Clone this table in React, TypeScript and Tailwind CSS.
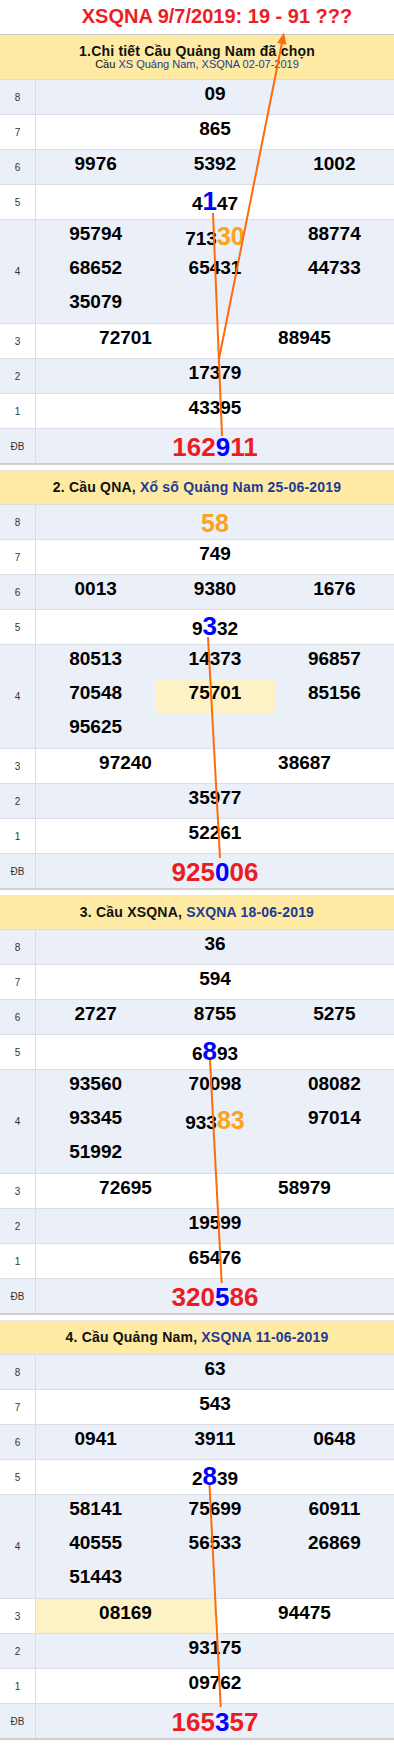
import React from 'react';

type Row = { label: string; cols: 1 | 2 | 3; items: string[] };
type Section = { head: React.ReactNode; tall?: boolean; rows: Row[]; db: string };

const sections: Section[] = [
  {
    tall: true,
    head: (
      <>
        <div className="text-[14px] leading-[14px] font-bold tracking-[0.2px] text-[#111]">1.Chi tiết Cầu Quảng Nam đã chọn</div>
        <div className="text-[11px] leading-[12px] text-[#111]">
          Cầu <span className="text-[#1f3a93]">XS Quảng Nam, XSQNA 02-07-2019</span>
        </div>
      </>
    ),
    rows: [
      { label: '8', cols: 1, items: ['09'] },
      { label: '7', cols: 1, items: ['865'] },
      { label: '6', cols: 3, items: ['9976', '5392', '1002'] },
      { label: '5', cols: 1, items: ['4[1]47'] },
      { label: '4', cols: 3, items: ['95794', '713{30}', '88774', '68652', '65431', '44733', '35079'] },
      { label: '3', cols: 2, items: ['72701', '88945'] },
      { label: '2', cols: 1, items: ['17379'] },
      { label: '1', cols: 1, items: ['43395'] },
    ],
    db: '162[9]11',
  },
  {
    head: (
      <div>
        2. Cầu QNA, <span className="text-[#1f3a93]">Xổ số Quảng Nam 25-06-2019</span>
      </div>
    ),
    rows: [
      { label: '8', cols: 1, items: ['<58>'] },
      { label: '7', cols: 1, items: ['749'] },
      { label: '6', cols: 3, items: ['0013', '9380', '1676'] },
      { label: '5', cols: 1, items: ['9[3]32'] },
      { label: '4', cols: 3, items: ['80513', '14373', '96857', '70548', '!75701', '85156', '95625'] },
      { label: '3', cols: 2, items: ['97240', '38687'] },
      { label: '2', cols: 1, items: ['35977'] },
      { label: '1', cols: 1, items: ['52261'] },
    ],
    db: '925[0]06',
  },
  {
    head: (
      <div>
        3. Cầu XSQNA, <span className="text-[#1f3a93]">SXQNA 18-06-2019</span>
      </div>
    ),
    rows: [
      { label: '8', cols: 1, items: ['36'] },
      { label: '7', cols: 1, items: ['594'] },
      { label: '6', cols: 3, items: ['2727', '8755', '5275'] },
      { label: '5', cols: 1, items: ['6[8]93'] },
      { label: '4', cols: 3, items: ['93560', '70098', '08082', '93345', '933{83}', '97014', '51992'] },
      { label: '3', cols: 2, items: ['72695', '58979'] },
      { label: '2', cols: 1, items: ['19599'] },
      { label: '1', cols: 1, items: ['65476'] },
    ],
    db: '320[5]86',
  },
  {
    head: (
      <div>
        4. Cầu Quảng Nam, <span className="text-[#1f3a93]">XSQNA 11-06-2019</span>
      </div>
    ),
    rows: [
      { label: '8', cols: 1, items: ['63'] },
      { label: '7', cols: 1, items: ['543'] },
      { label: '6', cols: 3, items: ['0941', '3911', '0648'] },
      { label: '5', cols: 1, items: ['2[8]39'] },
      { label: '4', cols: 3, items: ['58141', '75699', '60911', '40555', '56533', '26869', '51443'] },
      { label: '3', cols: 2, items: ['!08169', '94475'] },
      { label: '2', cols: 1, items: ['93175'] },
      { label: '1', cols: 1, items: ['09762'] },
    ],
    db: '165[3]57',
  },
];

// [x] = blue big digit, {x} = orange big digits, <x> = orange number alone in its row
function parse(v: string) {
  const out: { t: string; k: string }[] = [];
  let k = 'n';
  let buf = '';
  const flush = () => {
    if (buf) out.push({ t: buf, k });
    buf = '';
  };
  for (const ch of v) {
    if (ch === '[') { flush(); k = 'b'; }
    else if (ch === '{') { flush(); k = 'o'; }
    else if (ch === '<') { flush(); k = 'O'; }
    else if (ch === ']' || ch === '}' || ch === '>') { flush(); k = 'n'; }
    else buf += ch;
  }
  flush();
  return out;
}

function Num({ v, db }: { v: string; db?: boolean }) {
  return (
    <>
      {parse(v).map((p, i) => {
        if (db) {
          return (
            <span key={i} className={`text-[26px] leading-[37px] ${p.k === 'b' ? 'text-[#0000ff]' : 'text-[#ed1c24]'}`}>
              {p.t}
            </span>
          );
        }
        if (p.k === 'b') return <span key={i} className="text-[26px] leading-[32px] text-[#0000ff]">{p.t}</span>;
        if (p.k === 'o') return <span key={i} className="text-[25px] leading-[32px] text-[#fda31b]">{p.t}</span>;
        if (p.k === 'O') return <span key={i} className="text-[25px] leading-[36px] text-[#fda31b]">{p.t}</span>;
        return <span key={i}>{p.t}</span>;
      })}
    </>
  );
}

function TableRow({ label, cols, items, light, db }: Row & { light: boolean; db?: boolean }) {
  const grid = cols === 3 ? 'grid-cols-3' : cols === 2 ? 'grid-cols-2' : 'grid-cols-1';
  return (
    <div className={`flex border-t border-[#dadde4] ${light ? 'bg-[#ebeff8]' : 'bg-white'}`}>
      <div className="w-[36px] shrink-0 border-r border-[#dadde4] flex items-center justify-center text-[10px] text-[#333]">
        {label}
      </div>
      <div className={`flex-1 grid ${grid} ${items.length > 3 ? 'pb-[1px]' : ''}`}>
        {items.map((it, i) => {
          const hl = it.startsWith('!');
          return (
            <div
              key={i}
              className={`h-[34px] text-center text-[19px] leading-[28px] font-bold text-black whitespace-nowrap ${hl ? 'bg-[#fdf2c5]' : ''}`}
            >
              <Num v={hl ? it.slice(1) : it} db={db} />
            </div>
          );
        })}
      </div>
    </div>
  );
}

function Block({ s, first }: { s: Section; first: boolean }) {
  return (
    <section
      className={`border-b-2 border-b-[#cfcfcf] border-t ${first ? 'border-t-[#c8c8c8]' : 'mt-[5px] border-t-[#e6e6e6]'}`}
    >
      {s.tall ? (
        <div className="h-[44px] bg-[#feeaa3] flex flex-col items-center justify-center text-center">{s.head}</div>
      ) : (
        <div className="h-[33px] bg-[#feeaa3] flex items-center justify-center text-[14px] font-bold tracking-[0.2px] text-[#111]">
          {s.head}
        </div>
      )}
      {s.rows.map((r, i) => (
        <TableRow key={i} {...r} light={i % 2 === 0} />
      ))}
      <TableRow label="ĐB" cols={1} items={[s.db]} light db />
    </section>
  );
}

export default function App() {
  return (
    <div className="relative w-[394px] h-[1745px] bg-white font-['Liberation_Sans',Arial,sans-serif] overflow-hidden">
      <div className="h-[34px] pl-[40px] text-center text-[20px] leading-[32px] font-bold text-[#ee1d23] whitespace-nowrap">
        XSQNA 9/7/2019: 19 - 91 ???
      </div>

      {sections.map((s, i) => (
        <Block key={i} s={s} first={i === 0} />
      ))}

      {/* orange cầu lines drawn over the tables */}
      <svg className="absolute inset-0 pointer-events-none" width="394" height="1745" viewBox="0 0 394 1745">
        <g stroke="#ff6a0d" strokeWidth="2" fill="none">
          <line x1="213" y1="213" x2="222" y2="436" />
          <line x1="219" y1="359" x2="281.8" y2="43.8" />
          <line x1="208" y1="637" x2="220" y2="858" />
          <line x1="210" y1="1060" x2="221.7" y2="1283" />
          <line x1="209.5" y1="1485" x2="220.7" y2="1707" />
        </g>
        <polygon points="284,32.5 286.4,44.8 277.2,42.9" fill="#ff6a0d" />
      </svg>
    </div>
  );
}
